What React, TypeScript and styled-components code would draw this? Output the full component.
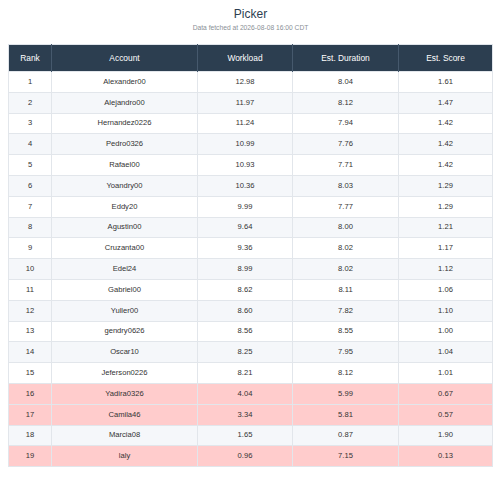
import styled, {createGlobalStyle} from "styled-components";

const GlobalStyle = createGlobalStyle`
    body {
        margin: 0;
        background: #ffffff;
        font-family: "Liberation Sans", Arial, sans-serif;
    }
`

const Page = styled.div`
    display: flex;
    flex-direction: column;
    align-items: center;
    padding: 6px 10px 0 11px;
`

const Title = styled.h1`
    margin: 0;
    font-size: 12px;
    font-weight: 400;
    line-height: 16px;
    color: #2c3e50;
`

const Subtitle = styled.p`
    margin: 1px 0 0 0;
    font-size: 6.7px;
    line-height: 10px;
    color: #8a8f96;
`

const Table = styled.table`
    width: 100%;
    margin-top: 11px;
    border-collapse: collapse;
    border: 1px solid #dfe4ea;
    table-layout: fixed;
`

const HeadCell = styled.th<{ $w: number }>`
    width: ${p => p.$w}px;
    height: 26px;
    padding: 0;
    background: #2c3e50;
    color: #ffffff;
    font-size: 8.4px;
    font-weight: 400;
    text-align: center;
    border-left: 1px solid #46596d;
    &:first-child {
        border-left: none;
    }
`

const Row = styled.tr<{ $flag: boolean; $even: boolean }>`
    background: ${p => p.$flag ? "#ffcccc" : p.$even ? "#f5f7fa" : "#ffffff"};
`

const Cell = styled.td`
    height: 19.8px;
    padding: 0;
    font-size: 7.6px;
    line-height: 10px;
    color: #333333;
    text-align: center;
    border: 1px solid #e2e6eb;
`

const columns: [string, number][] = [
    ["Rank", 42],
    ["Account", 145],
    ["Workload", 94],
    ["Est. Duration", 105],
    ["Est. Score", 93],
]

const rows: [string, string, string, string, boolean][] = [
    ["Alexander00", "12.98", "8.04", "1.61", false],
    ["Alejandro00", "11.97", "8.12", "1.47", false],
    ["Hernandez0226", "11.24", "7.94", "1.42", false],
    ["Pedro0326", "10.99", "7.76", "1.42", false],
    ["Rafael00", "10.93", "7.71", "1.42", false],
    ["Yoandry00", "10.36", "8.03", "1.29", false],
    ["Eddy20", "9.99", "7.77", "1.29", false],
    ["Agustin00", "9.64", "8.00", "1.21", false],
    ["Cruzanta00", "9.36", "8.02", "1.17", false],
    ["Edel24", "8.99", "8.02", "1.12", false],
    ["Gabriel00", "8.62", "8.11", "1.06", false],
    ["Yuller00", "8.60", "7.82", "1.10", false],
    ["gendry0626", "8.56", "8.55", "1.00", false],
    ["Oscar10", "8.25", "7.95", "1.04", false],
    ["Jeferson0226", "8.21", "8.12", "1.01", false],
    ["Yadira0326", "4.04", "5.99", "0.67", true],
    ["Camila46", "3.34", "5.81", "0.57", true],
    ["Marcia08", "1.65", "0.87", "1.90", false],
    ["laly", "0.96", "7.15", "0.13", true],
]

export default function App() {
    return (
        <>
            <GlobalStyle/>
            <Page>
                <Title>Picker</Title>
                <Subtitle>Data fetched at 2026-08-08 16:00 CDT</Subtitle>
                <Table>
                    <thead>
                    <tr>
                        {columns.map(([name, w]) => (
                            <HeadCell key={name} $w={w}>{name}</HeadCell>
                        ))}
                    </tr>
                    </thead>
                    <tbody>
                    {rows.map(([account, workload, duration, score, flag], i) => (
                        <Row key={account} $flag={flag} $even={i % 2 === 1}>
                            <Cell>{i + 1}</Cell>
                            <Cell>{account}</Cell>
                            <Cell>{workload}</Cell>
                            <Cell>{duration}</Cell>
                            <Cell>{score}</Cell>
                        </Row>
                    ))}
                    </tbody>
                </Table>
            </Page>
        </>
    );
}
